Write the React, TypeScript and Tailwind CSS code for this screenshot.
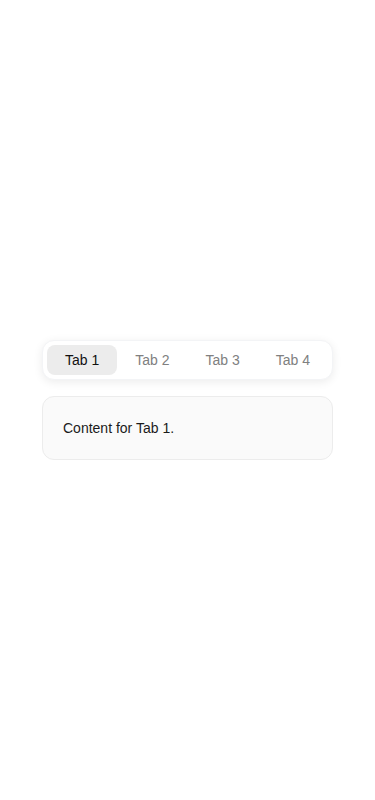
import { useState } from "react";

const tabs = ["Tab 1", "Tab 2", "Tab 3", "Tab 4"];

export default function App() {
  const [active, setActive] = useState(0);

  return (
    <div
      className="flex min-h-[800px] items-center justify-center bg-white"
      style={{ fontFamily: '"Liberation Sans", Arial, sans-serif' }}
    >
      <div className="w-[291px]">
        <div className="flex rounded-xl border border-gray-100 bg-white p-1 shadow-[0_2px_10px_rgba(0,0,0,0.08)]">
          {tabs.map((t, i) => (
            <button
              key={t}
              type="button"
              onClick={() => setActive(i)}
              className={
                i === active
                  ? "h-[30px] flex-1 rounded-lg bg-[#ececec] text-sm text-[#111]"
                  : "h-[30px] flex-1 rounded-lg text-sm text-[#808080]"
              }
            >
              {t}
            </button>
          ))}
        </div>
        <div className="mt-4 rounded-xl border border-[#ececec] bg-[#fafafa] px-5 py-[21px] text-sm text-[#1a1a1a]">
          Content for Tab {active + 1}.
        </div>
      </div>
    </div>
  );
}
